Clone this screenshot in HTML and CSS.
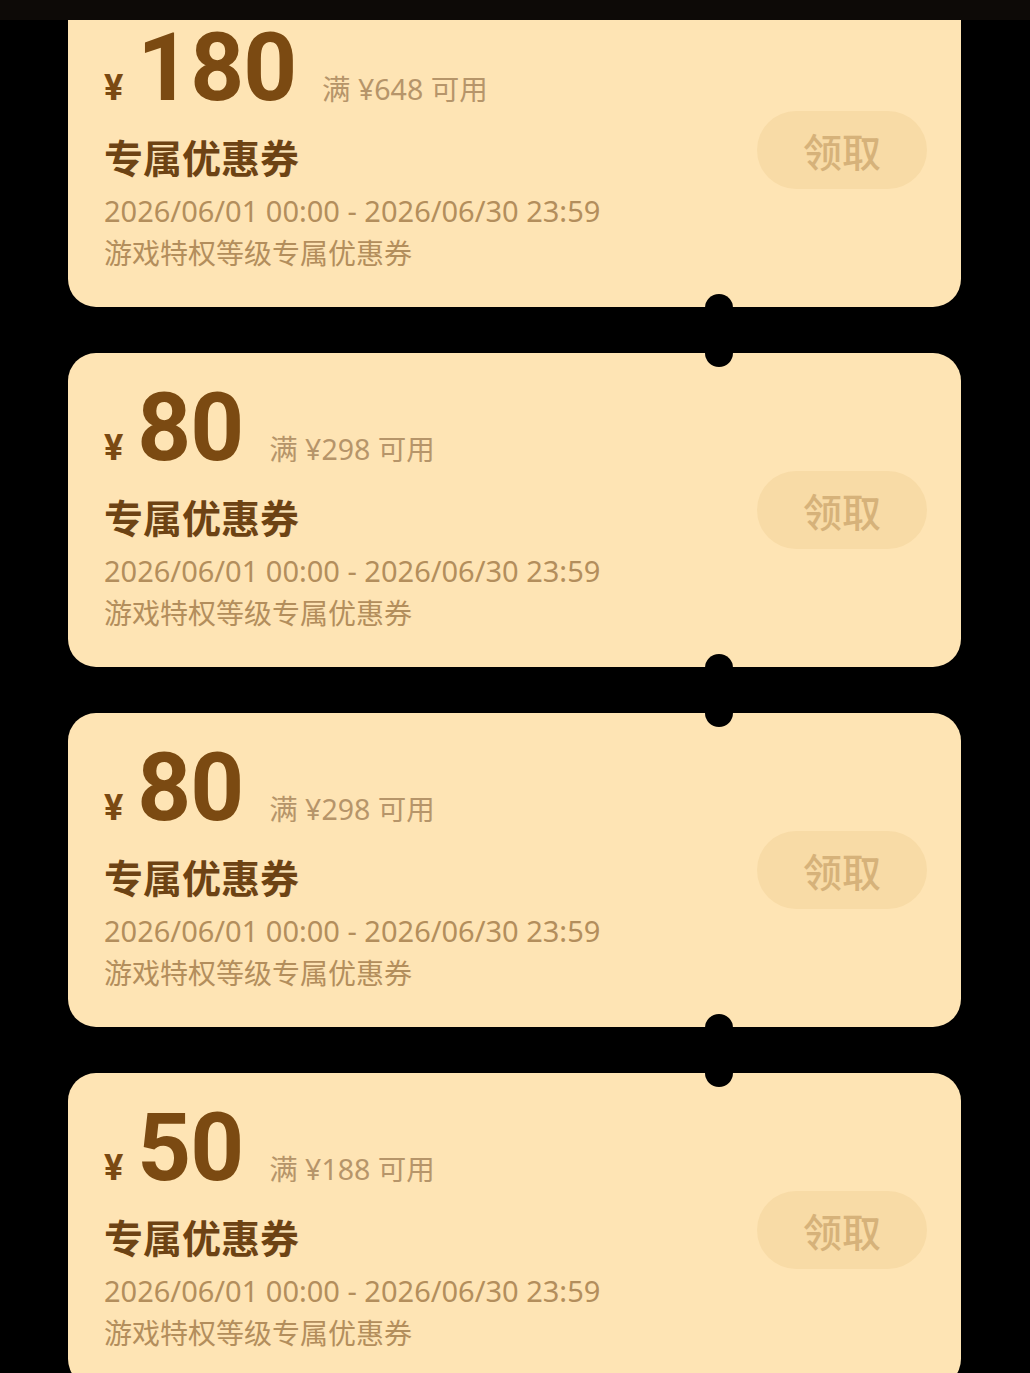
FILE: index.html
```html
<!DOCTYPE html>
<html lang="zh-CN">
<head>
    <meta charset="UTF-8">
    <title>专属优惠券</title>
    <link rel="stylesheet" href="styles.css">
</head>
<body>
    <div class="top-bar"></div>

    <div class="coupon-list">
        <div class="track">
            <div class="coupon">
                <div class="info">
                    <div class="price-row">
                        <span class="yen">¥</span>
                        <span class="amount">180</span>
                        <span class="limit">满 ¥648 可用</span>
                    </div>
                    <div class="title">专属优惠券</div>
                    <div class="date">2026/06/01 00:00 - 2026/06/30 23:59</div>
                    <div class="desc">游戏特权等级专属优惠券</div>
                </div>
                <button class="get-btn">领取</button>
                <div class="notch"></div>
            </div>

            <div class="coupon">
                <div class="info">
                    <div class="price-row">
                        <span class="yen">¥</span>
                        <span class="amount">80</span>
                        <span class="limit">满 ¥298 可用</span>
                    </div>
                    <div class="title">专属优惠券</div>
                    <div class="date">2026/06/01 00:00 - 2026/06/30 23:59</div>
                    <div class="desc">游戏特权等级专属优惠券</div>
                </div>
                <button class="get-btn">领取</button>
                <div class="notch"></div>
            </div>

            <div class="coupon">
                <div class="info">
                    <div class="price-row">
                        <span class="yen">¥</span>
                        <span class="amount">80</span>
                        <span class="limit">满 ¥298 可用</span>
                    </div>
                    <div class="title">专属优惠券</div>
                    <div class="date">2026/06/01 00:00 - 2026/06/30 23:59</div>
                    <div class="desc">游戏特权等级专属优惠券</div>
                </div>
                <button class="get-btn">领取</button>
                <div class="notch"></div>
            </div>

            <div class="coupon">
                <div class="info">
                    <div class="price-row">
                        <span class="yen">¥</span>
                        <span class="amount">50</span>
                        <span class="limit">满 ¥188 可用</span>
                    </div>
                    <div class="title">专属优惠券</div>
                    <div class="date">2026/06/01 00:00 - 2026/06/30 23:59</div>
                    <div class="desc">游戏特权等级专属优惠券</div>
                </div>
                <button class="get-btn">领取</button>
            </div>
        </div>
    </div>
</body>
</html>
```

FILE: styles.css
```css
body {
    margin: 0;
    background-color: #000;
    font-family: "Noto Sans", "Noto Sans CJK SC", sans-serif;
}
.top-bar {
    height: 20px;
    background-color: #0d0a07;
}
.coupon-list {
    height: 1353px;
    overflow: hidden;
}
.track {
    margin-top: -27px;
    padding: 0 69px 0 68px;
    display: flex;
    flex-direction: column;
    gap: 46px;
}
.coupon {
    position: relative;
    height: 314px;
    box-sizing: border-box;
    background-color: #fee4b4;
    border-radius: 28px;
    padding: 0 34px 0 36px;
    display: flex;
    align-items: center;
    justify-content: space-between;
}
.info {
    align-self: flex-start;
    padding-top: 39px;
}
.price-row {
    display: flex;
    align-items: baseline;
    height: 72px;
}
.yen {
    font-family: Roboto, "Noto Sans", sans-serif;
    font-weight: 700;
    font-size: 36px;
    line-height: 36px;
    color: #7b4a12;
    margin-right: 14px;
}
.amount {
    font-family: Roboto, "Noto Sans", sans-serif;
    font-weight: 700;
    font-size: 94px;
    line-height: 72px;
    color: #7b4a12;
    letter-spacing: -1px;
    margin-right: 26px;
}
.limit {
    font-size: 28.5px;
    line-height: 30px;
    color: #b6956a;
}
.title {
    margin-top: 29px;
    font-size: 39px;
    line-height: 50px;
    font-weight: 700;
    color: #6d4314;
}
.date {
    margin-top: 6px;
    font-size: 29px;
    line-height: 43px;
    color: #b38e5c;
}
.desc {
    font-size: 28px;
    line-height: 43px;
    color: #b38e5c;
}
.get-btn {
    width: 170px;
    height: 78px;
    border: none;
    border-radius: 39px;
    background-color: #f8dba6;
    color: #d6b27a;
    font-family: "Noto Sans CJK SC", sans-serif;
    font-size: 39px;
    font-weight: 500;
    cursor: pointer;
}
.notch {
    position: absolute;
    left: 637px;
    top: 301px;
    width: 28px;
    height: 73px;
    border-radius: 14px;
    background-color: #000;
    z-index: 2;
}
```
